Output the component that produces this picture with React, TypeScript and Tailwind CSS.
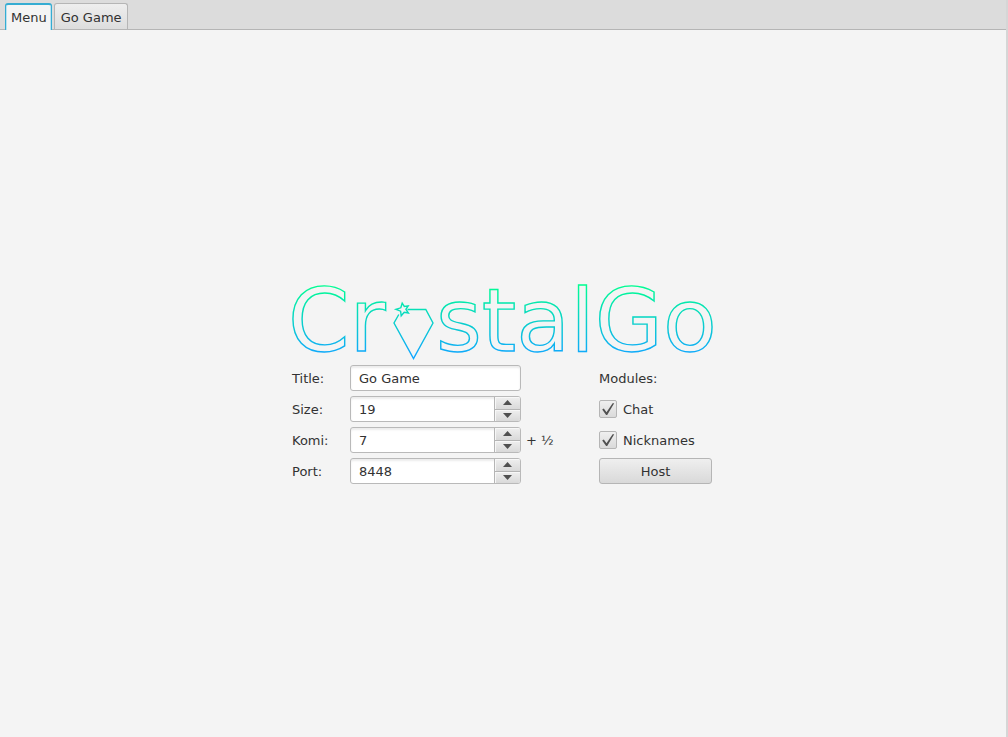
import { useState } from "react";

const fieldBox =
  "h-[26px] w-full rounded-[3px] border border-[#b9b9b9] bg-white text-[13px] text-[#323232] shadow-[inset_0_2px_2px_#ececec]";

function Logo() {
  return (
    <svg viewBox="290 282 424 79" className="h-[79px] w-[424px] overflow-visible" role="img" aria-label="CrystalGo">
      <defs>
        <linearGradient id="crystal" gradientUnits="userSpaceOnUse" x1="0" y1="284" x2="0" y2="356">
          <stop offset="0" stopColor="#00ff90" />
          <stop offset="1" stopColor="#10a6ff" />
        </linearGradient>
      </defs>
      <g fill="none" stroke="url(#crystal)" strokeWidth="1.4">
        <g fontFamily="'DejaVu Sans', sans-serif" fontSize="88">
          <text x="288" y="351">Cr</text>
          <text x="436" y="351">stalGo</text>
        </g>
        <path d="M407.5 309.5H425.8L433 323L413.5 358.5L394 323L398.8 314.5" />
        <path d="M402.2 303.2L404.3 306.4L408.2 305.9L405.9 309.3L408.4 313L404.2 312.2L401.2 315.8L400.6 311.2L395.9 309.4L400.8 307.8Z" />
      </g>
    </svg>
  );
}

function TextField({ id, label, initial }: { id: string; label: string; initial: string }) {
  const [value, setValue] = useState(initial);
  return (
    <>
      <label htmlFor={id} className="pt-0.5">{label}</label>
      <input id={id} type="text" className={`${fieldBox} px-2 pt-0.5`} value={value} onChange={(e) => setValue(e.target.value)} />
    </>
  );
}

function SpinnerField({ id, label, initial, step = 1 }: { id: string; label: string; initial: number; step?: number }) {
  const [value, setValue] = useState(initial);
  const button =
    "flex items-center justify-center bg-linear-to-b from-[#efefef] to-[#d9d9d9] text-[#505050] shadow-[inset_1px_1px_0_#f7f7f7]";
  return (
    <>
      <label htmlFor={id} className="pt-0.5">{label}</label>
      <div className={`${fieldBox} flex overflow-hidden`}>
        <input
          id={id}
          type="text"
          inputMode="numeric"
          className="min-w-0 flex-1 bg-transparent px-2 pt-0.5 outline-none"
          value={value}
          onChange={(e) => setValue(Number(e.target.value) || 0)}
        />
        <div className="flex w-[26px] flex-col border-l border-[#b5b5b5]">
          <button type="button" aria-label={`Increase ${label}`} className={`${button} h-[13px] shrink-0 border-b border-[#b5b5b5]`} onClick={() => setValue(value + step)}>
            <svg viewBox="0 0 9 5" className="h-[5px] w-[9px]" fill="currentColor"><path d="M0 5L4.5 0L9 5Z" /></svg>
          </button>
          <button type="button" aria-label={`Decrease ${label}`} className={`${button} flex-1`} onClick={() => setValue(value - step)}>
            <svg viewBox="0 0 9 5" className="h-[5px] w-[9px]" fill="currentColor"><path d="M0 0L4.5 5L9 0Z" /></svg>
          </button>
        </div>
      </div>
    </>
  );
}

function Module({ label }: { label: string }) {
  return (
    <label className="flex items-center gap-1.5">
      <span className="grid size-[18px] place-items-center">
        <input
          type="checkbox"
          defaultChecked
          className="peer col-start-1 row-start-1 size-[18px] appearance-none rounded-[2px] border border-[#b5b5b5] bg-linear-to-b from-[#efefef] to-[#dadada]"
        />
        <svg viewBox="0 0 18 18" className="pointer-events-none invisible col-start-1 row-start-1 size-[18px] peer-checked:visible" fill="#505050">
          <path d="M3.2 9.4L4.8 8.5L7.5 12.2L13.6 3.2H15.2L8.2 15H7.1Z" />
        </svg>
      </span>
      <span className="pt-0.5">{label}</span>
    </label>
  );
}

export default function App() {
  const [tab, setTab] = useState("Menu");
  return (
    <div className="flex min-h-screen flex-col border-r-2 border-[#d6d6d6] bg-[#f4f4f4] font-['DejaVu_Sans',sans-serif] text-[13px] text-[#323232]">
      <div role="tablist" className="flex h-[30px] items-end gap-0.5 border-b border-[#b5b5b5] bg-[#dcdcdc] px-[5px]">
        {["Menu", "Go Game"].map((name) => (
          <button
            key={name}
            role="tab"
            type="button"
            aria-selected={tab === name}
            onClick={() => setTab(name)}
            className={
              tab === name
                ? "-mb-px h-[27px] rounded-t-[3px] border border-b-0 border-t-2 border-[#35acd2] bg-[#f4f4f4] pl-[5px] pr-1 shadow-[inset_1px_0_0_#b9e2f0,inset_-1px_0_0_#b9e2f0]"
                : "h-[26px] rounded-t-[3px] border border-b-0 border-[#b5b5b5] bg-linear-to-b from-[#eeeeee] to-[#dddddd] pl-1.5 pr-[5px] pt-0.5"
            }
          >
            {name}
          </button>
        ))}
      </div>
      <main className="flex flex-1 flex-col items-center justify-center pr-0.5 pb-0.5">
        <div className="flex flex-col gap-1">
          <Logo />
          <form className="flex justify-between px-0.5" onSubmit={(e) => e.preventDefault()}>
            <div className="grid auto-rows-[26px] grid-cols-[53px_171px_auto] items-center gap-x-[5px] gap-y-[5px]">
              <TextField id="title" label="Title:" initial="Go Game" />
              <span />
              <SpinnerField id="size" label="Size:" initial={19} />
              <span />
              <SpinnerField id="komi" label="Komi:" initial={7} />
              <span className="pt-0.5">+ ½</span>
              <SpinnerField id="port" label="Port:" initial={8448} />
            </div>
            <fieldset aria-labelledby="modules" className="grid w-[113px] auto-rows-[26px] items-center gap-y-[5px]">
              <span id="modules" className="pt-0.5">Modules:</span>
              <Module label="Chat" />
              <Module label="Nicknames" />
              <button type="submit" className="h-[26px] rounded-[3px] border border-[#b5b5b5] bg-linear-to-b from-[#efefef] to-[#d9d9d9] pt-0.5">
                Host
              </button>
            </fieldset>
          </form>
        </div>
      </main>
    </div>
  );
}
